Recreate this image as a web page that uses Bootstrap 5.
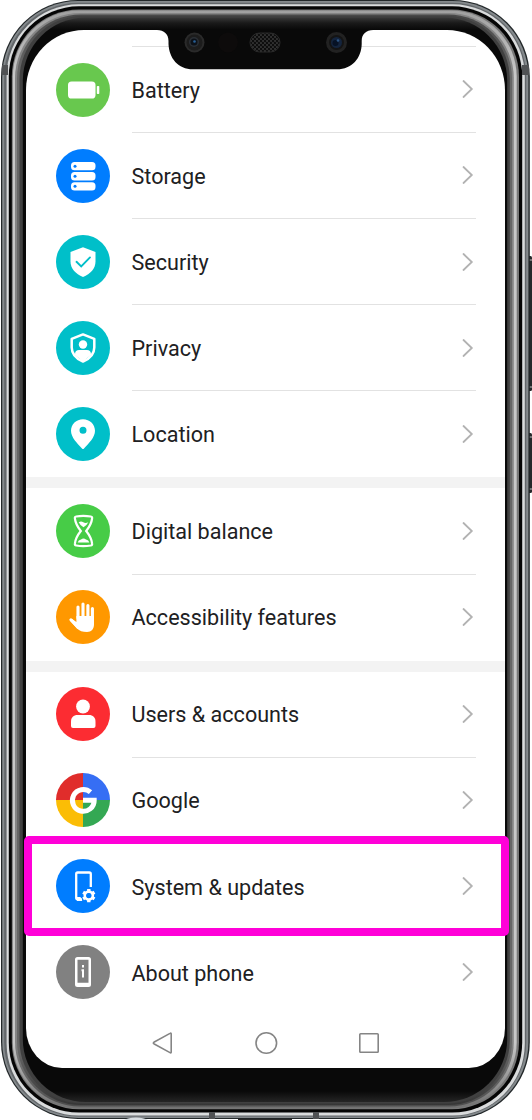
<!DOCTYPE html>
<html lang="en">
<head>
<meta charset="utf-8">
<meta name="viewport" content="width=device-width, initial-scale=1">
<title>Settings</title>
<link href="https://cdn.jsdelivr.net/npm/bootstrap@5.3.0/dist/css/bootstrap.min.css" rel="stylesheet">
<style>
body{font-family:Roboto,"Liberation Sans",sans-serif;background:#fff;overflow:hidden}
.phone{width:532px;height:1120px;padding:30px 27px 52px 25.5px}
.shell{left:0;top:0;z-index:0}
.screen{z-index:1;height:1038px;width:479.3px;background:#fff;border-radius:58px 58px 36px 36px/60px 60px 40px 40px;overflow:hidden;padding-top:16px}
.notch{left:0;top:0;z-index:2;pointer-events:none}
.group+.group{border-top:11px solid #f3f3f3}
.entry{height:86.1px;padding-left:30.5px;color:#202022}
.entry:hover{color:#202022}
.disc{width:54px;height:54px;flex:none;margin-top:-1px}
.entry-body{margin-left:21.5px;margin-right:28.5px;padding-right:2px;font-size:21.57px;border-bottom:1px solid #e2e2e2;padding-top:2.6px}
.entry-body svg{margin-top:-3px}
.top-rule{height:1px;background:#e2e2e2;margin:0 28.5px 0 106px}
.entry.last .entry-body{border-color:transparent}
.focus-box{z-index:3;left:24px;top:836px;width:485px;height:100px;border:8px solid #ff00d8;border-radius:5px;pointer-events:none}
.sysnav{height:52px;padding:2px 124.5px 0 126px}
</style>
</head>
<body>
<main class="phone position-relative">
<svg class="shell position-absolute" width="532" height="1120" viewBox="0 0 532 1120" aria-hidden="true">
<defs>
<linearGradient id="fade" x1="0" y1="0" x2="0" y2="1"><stop offset="0" stop-color="#383838"/><stop offset=".005" stop-color="#1a1a1a"/><stop offset=".011" stop-color="#090909"/><stop offset=".99" stop-color="#090909"/><stop offset="1" stop-color="#252525"/></linearGradient>
<linearGradient id="band" x1="0" y1="0" x2="0" y2="1"><stop offset="0" stop-color="#a0a0a0"/><stop offset=".06" stop-color="#c8c8c8"/><stop offset=".94" stop-color="#c8c8c8"/><stop offset="1" stop-color="#707070"/></linearGradient>
<linearGradient id="band2" x1="0" y1="0" x2="0" y2="1"><stop offset="0" stop-color="#858585"/><stop offset=".94" stop-color="#858585"/><stop offset="1" stop-color="#4c4c4c"/></linearGradient>
<linearGradient id="band3" x1="0" y1="0" x2="0" y2="1"><stop offset="0" stop-color="#484848"/><stop offset=".05" stop-color="#666"/><stop offset=".95" stop-color="#666"/><stop offset="1" stop-color="#363636"/></linearGradient>
</defs>
<g fill="#25282a"><rect x="526" y="256" width="6" height="135" rx="1.5"/><rect x="526" y="433" width="6" height="60" rx="1.5"/></g>
<path d="M529 260h3M529 387h3M529 437h3M529 489h3" stroke="#bbb"/>
<rect x="1" y="0" width="528.8" height="1119" rx="77" fill="#23282a"/>
<rect x="2.2" y="1" width="526.2" height="1117" rx="76" fill="#84898c"/>
<rect x="4.2" y="2.8" width="522" height="1113.7" rx="74" fill="#63676a"/>
<rect x="6.6" y="4.300" width="518.2" height="1111.300" rx="72" fill="#d9dbdc"/>
<rect x="8.8" y="6.300" width="513.400" height="1106.200" rx="70" fill="#050505"/>
<rect x="11.800" y="9.600" width="507.200" height="1099.600" rx="67" fill="#777"/>
<rect x="12.800" y="10.600" width="503.900" height="1097.600" rx="66" fill="url(#band)"/>
<rect x="15" y="13" width="498.800" height="1093.500" rx="65" fill="url(#band2)"/>
<rect x="17" y="14.500" width="495" height="1090.500" rx="64" fill="url(#band3)"/>
<rect x="19.500" y="16" width="490.300" height="1087.500" rx="63" fill="#404040"/>
<rect x="22.800" y="17.500" width="484.400" height="1084.500" rx="63" fill="url(#fade)"/>
<path d="M2 65h6v10H2zM522 65h7v10h-7zM209 1112h6v7h-6zM313 1112h6v7h-6z" fill="#505254"/>
<path d="M124 1120q4-2.500 12-2.500t12 2.500z" fill="#d7dce0"/>
<path d="M238 1119.400h54" stroke="#111"/>
</svg>

<section class="screen position-relative d-flex flex-column">
<div class="top-rule flex-shrink-0"></div>
<div class="group">
<a class="entry d-flex align-items-center text-decoration-none" href="#">
<svg class="disc" viewBox="0 0 54 54"><circle cx="27" cy="27" r="27" fill="#68c84e"/><rect x="12" y="18.500" width="27.500" height="17" rx="3.600" fill="#fff"/><rect x="40.800" y="23" width="2.500" height="8" rx=".8" fill="#fff"/></svg>
<span class="entry-body flex-grow-1 h-100 d-flex align-items-center justify-content-between">Battery<svg width="12" height="20" viewBox="0 0 12 20" fill="none" stroke="#b2b2b2" stroke-width="1.8" stroke-linecap="round"><path d="M1.500 2 9.800 10l-8.300 8"/></svg></span></a>
<a class="entry d-flex align-items-center text-decoration-none" href="#">
<svg class="disc" viewBox="0 0 54 54"><circle cx="27" cy="27" r="27" fill="#007dff"/><g fill="#fff"><rect x="15" y="13" width="24.500" height="8.300" rx="3.500"/><rect x="15" y="23.100" width="24.500" height="8.300" rx="3.500"/><rect x="15" y="33.200" width="24.500" height="8.300" rx="3.500"/></g><g fill="#007dff"><circle cx="19" cy="17.200" r="1.500"/><circle cx="19" cy="27.200" r="1.500"/><circle cx="19" cy="37.200" r="1.500"/></g></svg>
<span class="entry-body flex-grow-1 h-100 d-flex align-items-center justify-content-between">Storage<svg width="12" height="20" viewBox="0 0 12 20" fill="none" stroke="#b2b2b2" stroke-width="1.8" stroke-linecap="round"><path d="M1.500 2 9.800 10l-8.300 8"/></svg></span></a>
<a class="entry d-flex align-items-center text-decoration-none" href="#">
<svg class="disc" viewBox="0 0 54 54"><circle cx="27" cy="27" r="27" fill="#00bfc9"/><path d="M27 12.200 39.500 17v9.500c0 7-5 12.500-12.500 15.500-7.500-3-12.500-8.500-12.500-15.500V17z" fill="#fff"/><path d="m20.500 26.800 4.700 4.600 8.800-9" fill="none" stroke="#00bfc9" stroke-width="1.900" stroke-linecap="round"/></svg>
<span class="entry-body flex-grow-1 h-100 d-flex align-items-center justify-content-between">Security<svg width="12" height="20" viewBox="0 0 12 20" fill="none" stroke="#b2b2b2" stroke-width="1.8" stroke-linecap="round"><path d="M1.500 2 9.800 10l-8.300 8"/></svg></span></a>
<a class="entry d-flex align-items-center text-decoration-none" href="#">
<svg class="disc" viewBox="0 0 54 54"><circle cx="27" cy="27" r="27" fill="#00bfc9"/><path d="M27 13.400 38.300 17.800v8.700c0 6.300-4.500 11.200-11.300 14.100-6.800-2.900-11.300-7.800-11.300-14.100v-8.700z" fill="none" stroke="#fff" stroke-width="2.500" stroke-linejoin="round"/><circle cx="27" cy="23.500" r="4.200" fill="#fff"/><path d="M19 34v-1c0-2.500 1.700-4 4-4h8c2.300 0 4 1.500 4 4v1l-8 6.500z" fill="#fff"/></svg>
<span class="entry-body flex-grow-1 h-100 d-flex align-items-center justify-content-between">Privacy<svg width="12" height="20" viewBox="0 0 12 20" fill="none" stroke="#b2b2b2" stroke-width="1.8" stroke-linecap="round"><path d="M1.500 2 9.800 10l-8.300 8"/></svg></span></a>
<a class="entry last d-flex align-items-center text-decoration-none" href="#">
<svg class="disc" viewBox="0 0 54 54"><circle cx="27" cy="27" r="27" fill="#00bfc9"/><path fill-rule="evenodd" d="M27 12.200c-6.800 0-12 5-12 11.600 0 6.700 6.200 12.500 11 17.800q1 1 2 0c4.800-5.300 11-11.100 11-17.800 0-6.600-5.200-11.600-12-11.600zm0 7.600a3.500 3.500 0 1 1 0 7 3.500 3.500 0 0 1 0-7z" fill="#fff"/></svg>
<span class="entry-body flex-grow-1 h-100 d-flex align-items-center justify-content-between">Location<svg width="12" height="20" viewBox="0 0 12 20" fill="none" stroke="#b2b2b2" stroke-width="1.8" stroke-linecap="round"><path d="M1.500 2 9.800 10l-8.300 8"/></svg></span></a>
</div>
<div class="group">
<a class="entry d-flex align-items-center text-decoration-none" href="#">
<svg class="disc" viewBox="0 0 54 54"><circle cx="27" cy="27" r="27" fill="#47cc47"/><path d="M20.200 12.500Q27 11.300 34.800 12.500q1.600.3 1.300 2C35.500 19.500 33 23.500 30.200 27c2.800 3.500 5.300 7.500 5.900 12.500q.3 1.700-1.300 2Q27 42.700 20.200 41.500q-1.600-.3-1.300-2C19.500 34.500 22 30.500 24.800 27 22 23.500 19.500 19.500 18.900 14.500q-.3-1.700 1.300-2z" fill="none" stroke="#fff" stroke-width="2.200"/><path d="M22.700 18.300q2.400-1.600 4.600 0t5 0q-1.800 3.600-4.800 5-3-1.400-4.800-5zM21.700 38.500q.6-2.500 3.300-3 2.500-2 5 0 2.700.5 3.300 3z" fill="#fff"/></svg>
<span class="entry-body flex-grow-1 h-100 d-flex align-items-center justify-content-between">Digital balance<svg width="12" height="20" viewBox="0 0 12 20" fill="none" stroke="#b2b2b2" stroke-width="1.8" stroke-linecap="round"><path d="M1.500 2 9.800 10l-8.300 8"/></svg></span></a>
<a class="entry last d-flex align-items-center text-decoration-none" href="#">
<svg class="disc" viewBox="0 0 54 54"><circle cx="27" cy="27" r="27" fill="#ff9800"/><g stroke="#fff" stroke-linecap="round" stroke-width="3.100" fill="none"><path d="M22 28V17M27 27V14M31.900 27V15.500M36.400 28V18.500M14.900 29.800l7 7.500" /></g><path d="M20.400 26H38v8.500c0 4.500-2.500 7.500-7 7.500-4.500 0-7.500-1-10-3.500l-7-8 1.800-1.800 4.600 3.300z" fill="#fff"/></svg>
<span class="entry-body flex-grow-1 h-100 d-flex align-items-center justify-content-between">Accessibility features<svg width="12" height="20" viewBox="0 0 12 20" fill="none" stroke="#b2b2b2" stroke-width="1.8" stroke-linecap="round"><path d="M1.500 2 9.800 10l-8.300 8"/></svg></span></a>
</div>
<div class="group">
<a class="entry d-flex align-items-center text-decoration-none" href="#">
<svg class="disc" viewBox="0 0 54 54"><circle cx="27" cy="27" r="27" fill="#fc2c32"/><circle cx="27" cy="19.500" r="6.900" fill="#fff"/><path d="M15 39v-4.500c0-4 2.600-6.500 6.500-6.500h11.500c3.900 0 6.500 2.500 6.500 6.500V39q0 2-2 2H17q-2 0-2-2z" fill="#fff"/></svg>
<span class="entry-body flex-grow-1 h-100 d-flex align-items-center justify-content-between">Users &amp; accounts<svg width="12" height="20" viewBox="0 0 12 20" fill="none" stroke="#b2b2b2" stroke-width="1.8" stroke-linecap="round"><path d="M1.500 2 9.800 10l-8.300 8"/></svg></span></a>
<a class="entry d-flex align-items-center text-decoration-none" href="#">
<svg class="disc" viewBox="0 0 54 54"><path d="M27 27H0A27 27 0 0 1 27 0z" fill="#e02d2b"/><path d="M27 27V0a27 27 0 0 1 27 27z" fill="#366ef4"/><path d="M27 27h27a27 27 0 0 1-27 27z" fill="#34a853"/><path d="M27 27v27A27 27 0 0 1 0 27z" fill="#fbbd05"/><path d="M34.500 19.200A10.900 10.900 0 1 0 38.200 27.200H27" fill="none" stroke="#fff" stroke-width="5"/></svg>
<span class="entry-body flex-grow-1 h-100 d-flex align-items-center justify-content-between">Google<svg width="12" height="20" viewBox="0 0 12 20" fill="none" stroke="#b2b2b2" stroke-width="1.8" stroke-linecap="round"><path d="M1.500 2 9.800 10l-8.300 8"/></svg></span></a>
<a class="entry d-flex align-items-center text-decoration-none" href="#">
<svg class="disc" viewBox="0 0 54 54"><circle cx="27" cy="27" r="27" fill="#007dff"/><path d="M26 40.300h-4.300q-1.500 0-1.500-1.500V15q0-1.500 1.500-1.500h11.600q1.500 0 1.500 1.500v13" fill="none" stroke="#fff" stroke-width="2.300"/><path d="M20 38h4.500l1.800 4H21z" fill="#fff"/><circle cx="32.800" cy="36.600" r="4" fill="none" stroke="#fff" stroke-width="2.600"/><path d="M32.800 30v3M32.800 40.200v3M27.100 33.300l2.600 1.500M35.900 38.400l2.600 1.500M27.100 39.900l2.600-1.500M35.900 34.800l2.600-1.500" stroke="#fff" stroke-width="3.400"/><circle cx="32.800" cy="36.600" r="2.300" fill="#007dff"/></svg>
<span class="entry-body flex-grow-1 h-100 d-flex align-items-center justify-content-between">System &amp; updates<svg width="12" height="20" viewBox="0 0 12 20" fill="none" stroke="#b2b2b2" stroke-width="1.8" stroke-linecap="round"><path d="M1.500 2 9.800 10l-8.300 8"/></svg></span></a>
<a class="entry last d-flex align-items-center text-decoration-none" href="#">
<svg class="disc" viewBox="0 0 54 54"><circle cx="27" cy="27" r="27" fill="#818181"/><path fill-rule="evenodd" d="M21.500 12h11q2.500 0 2.500 2.500v25q0 2.500-2.500 2.500h-11q-2.500 0-2.500-2.500v-25q0-2.500 2.500-2.500zm0 2.800v22.900h11V14.800z" fill="#fff"/><path d="M27 20v2.500M25.500 25.200h1.500v7.300" fill="none" stroke="#fff" stroke-width="2"/></svg>
<span class="entry-body flex-grow-1 h-100 d-flex align-items-center justify-content-between">About phone<svg width="12" height="20" viewBox="0 0 12 20" fill="none" stroke="#b2b2b2" stroke-width="1.8" stroke-linecap="round"><path d="M1.500 2 9.800 10l-8.300 8"/></svg></span></a>
</div>
<nav class="sysnav d-flex align-items-center justify-content-between" aria-label="System navigation">
<svg width="22" height="24" viewBox="0 0 22 24" fill="none" stroke="#858585" stroke-width="1.600" stroke-linejoin="round"><path d="M18 2.400q1.200-.7 1.200.7v17.800q0 1.400-1.200.7L1.800 12.700q-1-.7 0-1.400z"/></svg>
<svg width="24" height="24" viewBox="0 0 24 24" fill="none" stroke="#858585" stroke-width="1.600"><circle cx="12.300" cy="12" r="10.300"/></svg>
<svg width="22" height="24" viewBox="0 0 22 24" fill="none" stroke="#858585" stroke-width="1.600"><rect x="1.800" y="2.700" width="18.400" height="18.600" rx=".8"/></svg>
</nav>
</section>

<svg class="notch position-absolute" width="532" height="72" viewBox="0 0 532 72" aria-hidden="true">
<defs><pattern id="mesh" width="4" height="4" patternUnits="userSpaceOnUse"><rect width="4" height="4" fill="#303030"/><circle cx="1" cy="1" r="1.200" fill="#0c0c0c"/><circle cx="3" cy="3" r="1.200" fill="#0c0c0c"/></pattern></defs>
<path d="M157 29v1c7 0 11.500 4 11.500 11v3C169 58 178 69.300 193 69.300H337C352 69.300 361.500 58 361.700 44v-3c0-7 4.500-11 11.500-11v-1z" fill="#090909"/>
<circle cx="194.500" cy="42.500" r="10" fill="#2a2a2a"/><circle cx="194.500" cy="42.500" r="8" fill="#1c1c1c"/><circle cx="194" cy="42" r="5" fill="#2b3036"/><circle cx="194" cy="42" r="3.500" fill="#0c1118"/><circle cx="194.500" cy="41.500" r="1.300" fill="#275f96"/>
<circle cx="228" cy="42.500" r="10" fill="#0d0b0b"/>
<rect x="250" y="33" width="30" height="19" rx="9.500" fill="url(#mesh)" stroke="#2b2b2b"/>
<circle cx="336.500" cy="42.500" r="10.500" fill="#222"/><circle cx="336.500" cy="42.500" r="7.500" fill="#141414"/><circle cx="336.500" cy="42.500" r="5.500" fill="#14243d"/><circle cx="335.500" cy="43" r="3" fill="#071225"/><circle cx="338" cy="40.500" r="1.300" fill="#2c5585"/>
</svg>
<div class="focus-box position-absolute"></div>
</main>
<script src="https://cdn.jsdelivr.net/npm/bootstrap@5.3.0/dist/js/bootstrap.bundle.min.js"></script>
</body>
</html>
